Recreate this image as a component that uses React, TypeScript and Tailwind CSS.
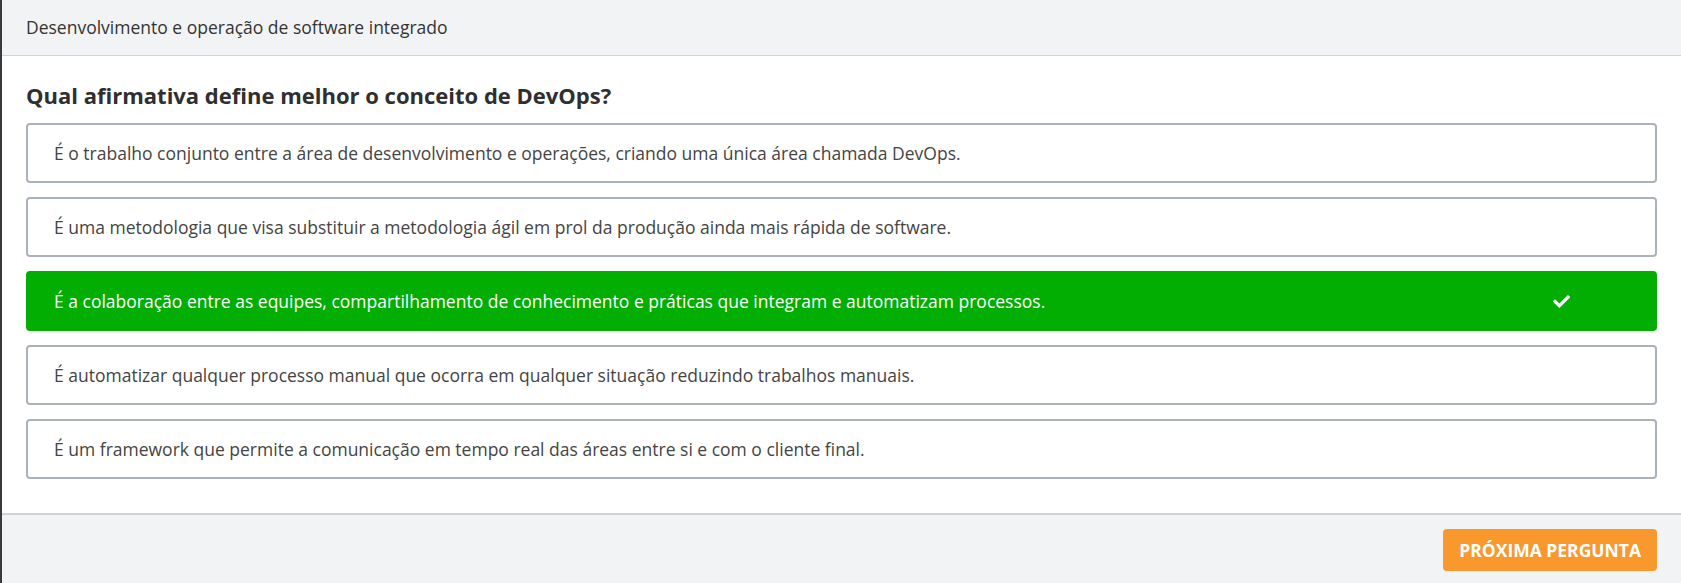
import React from 'react'
import { FaCheck } from 'react-icons/fa'

const options = [
    'É o trabalho conjunto entre a área de desenvolvimento e operações, criando uma única área chamada DevOps.',
    'É uma metodologia que visa substituir a metodologia ágil em prol da produção ainda mais rápida de software.',
    'É a colaboração entre as equipes, compartilhamento de conhecimento e práticas que integram e automatizam processos.',
    'É automatizar qualquer processo manual que ocorra em qualquer situação reduzindo trabalhos manuais.',
    'É um framework que permite a comunicação em tempo real das áreas entre si e com o cliente final.',
]

export default function App() {
    const correct = 2
    return (
        <div className="flex flex-col h-[583px] w-full border-l-2 border-[#3a3a3a] bg-white font-['Open_Sans',sans-serif] text-[#444]">

            <div className="h-[56px] shrink-0 flex items-center px-6 bg-[#f2f3f5] border-b border-[#cfd2d6] text-[17.5px] text-[#333]">
                Desenvolvimento e operação de software integrado
            </div>

            <div className="px-6 pt-[25px] pb-[34px]">
                <h2 className="text-[22px] leading-[28px] font-bold text-[#2f2f2f] mb-[14px]">
                    Qual afirmativa define melhor o conceito de DevOps?
                </h2>
                <div className="flex flex-col gap-[14px]">
                    {options.map((text, i) =>
                        i === correct ? (
                            <div key={i} className="h-[60px] flex items-center justify-between rounded bg-[#01ae01] border-2 border-[#01ae01] pl-[26px] pr-[85px] text-[17.5px] text-white font-medium">
                                <span>{text}</span>
                                <FaCheck className="w-[17px] h-[17px]" />
                            </div>
                        ) : (
                            <div key={i} className="h-[60px] flex items-center rounded border-2 border-[#aab2bb] pl-[26px] text-[17.5px] text-[#444]">
                                {text}
                            </div>
                        )
                    )}
                </div>
            </div>

            <div className="flex-1 flex justify-end items-start pt-[14px] pr-6 bg-[#f2f3f5] border-t-2 border-[#cfd2d6]">
                <button className="h-[42px] px-[16px] rounded bg-[#f9982c] text-white text-[17.5px] font-bold uppercase">
                    Próxima pergunta
                </button>
            </div>

        </div>
    )
}
